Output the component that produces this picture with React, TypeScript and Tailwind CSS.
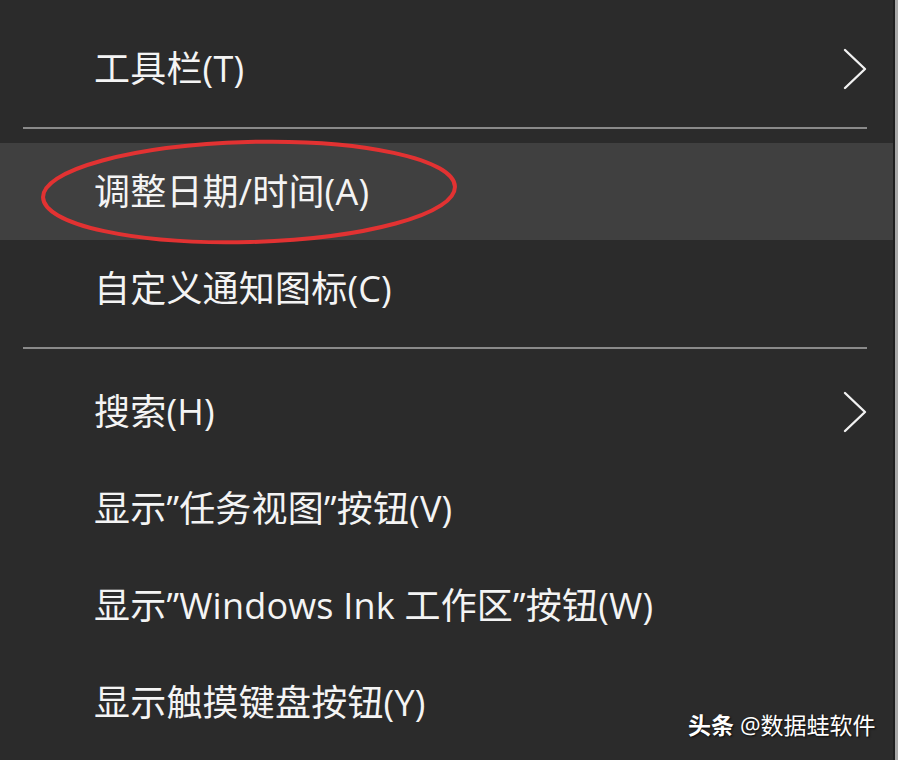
import React from "react";

const Chevron = () => (
  <svg width="26" height="42" viewBox="0 0 26 42" fill="none" className="shrink-0">
    <path d="M3 2 L23 21 L3 40" stroke="#f2f2f2" strokeWidth="2.4" strokeLinecap="round" strokeLinejoin="round" />
  </svg>
);

type Item = { label: string; sub?: boolean; hl?: boolean };

const Row = ({ label, sub, hl }: Item) => (
  <div className={`h-[97px] flex items-center pl-[94px] pr-[25px] ${hl ? "bg-[#404040]" : ""}`}>
    <span className="flex-1 text-[36px] leading-none text-[#f4f4f4] whitespace-nowrap tracking-[0.2px]">{label}</span>
    {sub && <Chevron />}
  </div>
);

const Sep = () => (
  <div className="h-[26px] pt-[10px]">
    <div className="ml-[23px] w-[844px] h-[2px] bg-[#8a8a8a]" />
  </div>
);

export default function App() {
  return (
    <div
      className="w-[898px] h-[760px] bg-[#2b2b2b] flex overflow-hidden relative"
      style={{ fontFamily: '"Open Sans", "Noto Sans CJK SC", sans-serif' }}
    >
      <div className="w-[893px] pt-[20px] flex flex-col relative">
        <Row label="工具栏(T)" sub />
        <Sep />
        <Row label="调整日期/时间(A)" hl />
        <Row label="自定义通知图标(C)" />
        <Sep />
        <Row label="搜索(H)" sub />
        <Row label="显示”任务视图”按钮(V)" />
        <Row label="显示”Windows Ink 工作区”按钮(W)" />
        <Row label="显示触摸键盘按钮(Y)" />
        <svg className="absolute left-[38px] top-[136px]" width="422" height="112" viewBox="0 0 422 112" fill="none">
          <ellipse cx="211" cy="56" rx="206" ry="50" stroke="#e23232" strokeWidth="4" transform="rotate(-1.5 211 56)" />
        </svg>
        <div
          className="absolute left-[688px] top-[714px] text-[23px] leading-none text-white whitespace-nowrap"
          style={{ textShadow: "1px 1px 2px rgba(0,0,0,0.8)" }}
        >
          <span className="font-bold">头条</span> @数据蛙软件
        </div>
      </div>
      <div className="w-[2px] bg-[#1e1e1e]" />
      <div className="w-[3px] bg-[#a8a8a8]" />
    </div>
  );
}
